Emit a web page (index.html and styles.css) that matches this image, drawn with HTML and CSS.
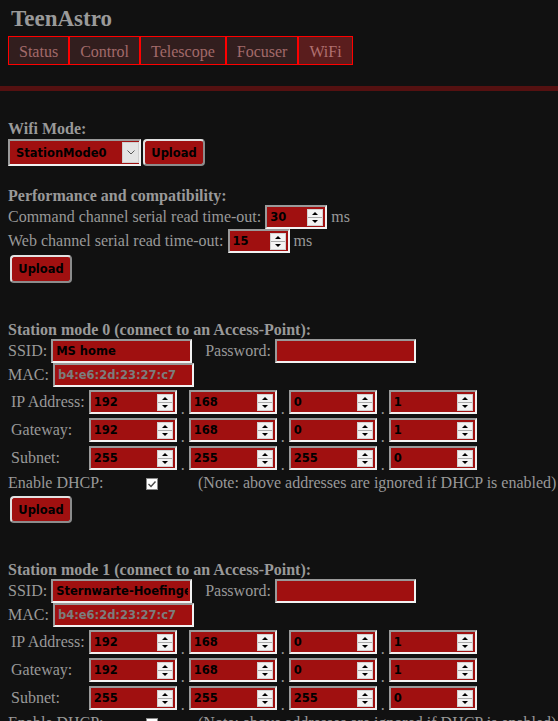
FILE: index.html
```html
<!DOCTYPE html>
<html lang="en">
<head>
<meta charset="utf-8">
<title>TeenAstro</title>
<link rel="stylesheet" href="styles.css">
</head>
<body>
<header class="head">
  <div class="title">TeenAstro</div>
  <nav class="nav">
    <a class="tab">Status</a><a class="tab">Control</a><a class="tab">Telescope</a><a class="tab">Focuser</a><a class="tab active">WiFi</a>
  </nav>
</header>
<div class="rule"></div>
<main class="content">
  <div class="heading first">Wifi Mode:</div>
  <div class="row sel-row">
    <span class="sel">
      <select class="sel-input"><option>StationMode0</option><option>StationMode1</option><option>AccessPoint</option></select>
      <span class="arrow"><svg width="8" height="5" viewBox="0 0 8 5"><path d="M0.5 0.5 L4 4 L7.5 0.5" fill="none" stroke="#5a5a5a" stroke-width="1"/></svg></span>
    </span>
    <button class="btn">Upload</button>
  </div>

  <div class="heading perf">Performance and compatibility:</div>
  <div class="row line">
    <span>Command channel serial read time-out:</span>
    <span class="field w62"><input class="fin" value="30"><span class="spin"><i class="up"></i><i class="dn"></i></span></span>
    <span>ms</span>
  </div>
  <div class="row line">
    <span>Web channel serial read time-out:</span>
    <span class="field w62"><input class="fin" value="15"><span class="spin"><i class="up"></i><i class="dn"></i></span></span>
    <span>ms</span>
  </div>
  <div class="row"><button class="btn b1">Upload</button></div>

  <div class="heading station">Station mode 0 (connect to an Access-Point):</div>
  <div class="row line">
    <span>SSID:</span>
    <span class="field w141"><input class="fin" value="MS home"></span>
    <span class="pw">Password:</span>
    <span class="field w141"><input class="fin" value=""></span>
  </div>
  <div class="row line">
    <span>MAC:</span>
    <span class="field w141"><input class="fin ro" value="b4:e6:2d:23:27:c7" readonly></span>
  </div>
  <table class="ip">
    <tr>
      <td class="lbl">IP Address:</td>
      <td><span class="field w88"><input class="fin" value="192"><span class="spin"><i class="up"></i><i class="dn"></i></span></span></td>
      <td class="dot">.</td>
      <td><span class="field w88"><input class="fin" value="168"><span class="spin"><i class="up"></i><i class="dn"></i></span></span></td>
      <td class="dot">.</td>
      <td><span class="field w88"><input class="fin" value="0"><span class="spin"><i class="up"></i><i class="dn"></i></span></span></td>
      <td class="dot">.</td>
      <td><span class="field w88"><input class="fin" value="1"><span class="spin"><i class="up"></i><i class="dn"></i></span></span></td>
    </tr>
    <tr>
      <td class="lbl">Gateway:</td>
      <td><span class="field w88"><input class="fin" value="192"><span class="spin"><i class="up"></i><i class="dn"></i></span></span></td>
      <td class="dot">.</td>
      <td><span class="field w88"><input class="fin" value="168"><span class="spin"><i class="up"></i><i class="dn"></i></span></span></td>
      <td class="dot">.</td>
      <td><span class="field w88"><input class="fin" value="0"><span class="spin"><i class="up"></i><i class="dn"></i></span></span></td>
      <td class="dot">.</td>
      <td><span class="field w88"><input class="fin" value="1"><span class="spin"><i class="up"></i><i class="dn"></i></span></span></td>
    </tr>
    <tr>
      <td class="lbl">Subnet:</td>
      <td><span class="field w88"><input class="fin" value="255"><span class="spin"><i class="up"></i><i class="dn"></i></span></span></td>
      <td class="dot">.</td>
      <td><span class="field w88"><input class="fin" value="255"><span class="spin"><i class="up"></i><i class="dn"></i></span></span></td>
      <td class="dot">.</td>
      <td><span class="field w88"><input class="fin" value="255"><span class="spin"><i class="up"></i><i class="dn"></i></span></span></td>
      <td class="dot">.</td>
      <td><span class="field w88"><input class="fin" value="0"><span class="spin"><i class="up"></i><i class="dn"></i></span></span></td>
    </tr>
  </table>
  <div class="row dhcp">
    <span class="dlabel">Enable DHCP:</span>
    <span class="check"><svg width="10" height="10" viewBox="0 0 10 10"><path d="M1.5 5 L4 7.5 L8.5 2.5" fill="none" stroke="#4a4a4a" stroke-width="1.4"/></svg></span>
    <span class="note">(Note: above addresses are ignored if DHCP is enabled)</span>
  </div>
  <div class="row"><button class="btn b2">Upload</button></div>

  <div class="heading station">Station mode 1 (connect to an Access-Point):</div>
  <div class="row line">
    <span>SSID:</span>
    <span class="field w141"><input class="fin" value="Sternwarte-Hoefingen"></span>
    <span class="pw">Password:</span>
    <span class="field w141"><input class="fin" value=""></span>
  </div>
  <div class="row line">
    <span>MAC:</span>
    <span class="field w141"><input class="fin ro" value="b4:e6:2d:23:27:c7" readonly></span>
  </div>
  <table class="ip">
    <tr>
      <td class="lbl">IP Address:</td>
      <td><span class="field w88"><input class="fin" value="192"><span class="spin"><i class="up"></i><i class="dn"></i></span></span></td>
      <td class="dot">.</td>
      <td><span class="field w88"><input class="fin" value="168"><span class="spin"><i class="up"></i><i class="dn"></i></span></span></td>
      <td class="dot">.</td>
      <td><span class="field w88"><input class="fin" value="0"><span class="spin"><i class="up"></i><i class="dn"></i></span></span></td>
      <td class="dot">.</td>
      <td><span class="field w88"><input class="fin" value="1"><span class="spin"><i class="up"></i><i class="dn"></i></span></span></td>
    </tr>
    <tr>
      <td class="lbl">Gateway:</td>
      <td><span class="field w88"><input class="fin" value="192"><span class="spin"><i class="up"></i><i class="dn"></i></span></span></td>
      <td class="dot">.</td>
      <td><span class="field w88"><input class="fin" value="168"><span class="spin"><i class="up"></i><i class="dn"></i></span></span></td>
      <td class="dot">.</td>
      <td><span class="field w88"><input class="fin" value="0"><span class="spin"><i class="up"></i><i class="dn"></i></span></span></td>
      <td class="dot">.</td>
      <td><span class="field w88"><input class="fin" value="1"><span class="spin"><i class="up"></i><i class="dn"></i></span></span></td>
    </tr>
    <tr>
      <td class="lbl">Subnet:</td>
      <td><span class="field w88"><input class="fin" value="255"><span class="spin"><i class="up"></i><i class="dn"></i></span></span></td>
      <td class="dot">.</td>
      <td><span class="field w88"><input class="fin" value="255"><span class="spin"><i class="up"></i><i class="dn"></i></span></span></td>
      <td class="dot">.</td>
      <td><span class="field w88"><input class="fin" value="255"><span class="spin"><i class="up"></i><i class="dn"></i></span></span></td>
      <td class="dot">.</td>
      <td><span class="field w88"><input class="fin" value="0"><span class="spin"><i class="up"></i><i class="dn"></i></span></span></td>
    </tr>
  </table>
  <div class="row dhcp">
    <span class="dlabel">Enable DHCP:</span>
    <span class="check"><svg width="10" height="10" viewBox="0 0 10 10"><path d="M1.5 5 L4 7.5 L8.5 2.5" fill="none" stroke="#4a4a4a" stroke-width="1.4"/></svg></span>
    <span class="note">(Note: above addresses are ignored if DHCP is enabled)</span>
  </div>
  <div class="row"><button class="btn b2">Upload</button></div>
</main>
</body>
</html>
```

FILE: styles.css
```css
html, body {
  margin: 0;
  padding: 0;
  background: #111111;
}
body {
  font-family: "Liberation Serif", "Times New Roman", serif;
  font-size: 16px;
  color: #999999;
  overflow: hidden;
}
.head {
  padding: 5px 8px 0 8px;
}
.title {
  font-size: 23px;
  font-weight: bold;
  line-height: 28px;
  margin-left: 3px;
  color: #9a9a9a;
}
.nav {
  display: flex;
  margin-top: 3px;
}
.tab {
  display: block;
  border: 1px solid #ff0000;
  background: #321e1e;
  color: #a26a6a;
  padding: 6px 10px 3px 10px;
  line-height: 18px;
  text-decoration: none;
}
.tab.active {
  background: #5a1d1d;
  color: #b07070;
}
.rule {
  margin-top: 21px;
  height: 5px;
  background: #551111;
}
.content {
  padding: 0 8px;
}
.heading {
  font-weight: bold;
  line-height: 18px;
}
.heading.first { margin-top: 29px; }
.heading.perf { margin-top: 21px; }
.heading.station { margin-top: 38px; }
.row {
  display: flex;
  align-items: center;
  white-space: nowrap;
}
.row.line {
  height: 24px;
  gap: 4px;
}
.sel-row {
  margin-top: 1px;
  height: 27px;
  gap: 2px;
}
.sel {
  box-sizing: border-box;
  display: flex;
  align-items: center;
  width: 133px;
  height: 27px;
  border: 2px solid;
  border-color: #9a9a9a #f0f0f0 #f0f0f0 #9a9a9a;
  background: #a01010;
}
.sel-input {
  appearance: none;
  -webkit-appearance: none;
  flex: 1;
  min-width: 0;
  height: 100%;
  border: 0;
  background: transparent;
  font: bold 11.5px "DejaVu Sans", Verdana, sans-serif;
  color: #000;
  padding: 0 0 0 6px;
  outline: none;
}
.arrow {
  box-sizing: border-box;
  width: 17px;
  height: 21px;
  background: #e4e4e4;
  border: 1px solid #cfcfcf;
  display: flex;
  align-items: center;
  justify-content: center;
}
.btn {
  box-sizing: border-box;
  width: 62px;
  height: 27px;
  border: 2px solid;
  border-color: #e2e2e2 #8c8c8c #8c8c8c #e2e2e2;
  border-radius: 4px;
  background: #a01010;
  color: #000;
  font: bold 11.5px "DejaVu Sans", Verdana, sans-serif;
  padding: 0;
}
.b1 {
  margin: 2px 0 0 2px;
  height: 28px;
}
.b2 {
  margin: 4px 0 0 2px;
  height: 27px;
}
.field {
  box-sizing: border-box;
  display: flex;
  align-items: center;
  height: 24px;
  border: 2px solid;
  border-color: #9a9a9a #f2f2f2 #f2f2f2 #9a9a9a;
  background: #a01010;
  padding: 0 2px 0 3px;
}
.w62 { width: 62px; }
.w88 { width: 88px; }
.w141 { width: 141px; }
.fin {
  flex: 1;
  min-width: 0;
  border: 0;
  padding: 0;
  margin: 0;
  background: transparent;
  font: bold 11.5px "DejaVu Sans", Verdana, sans-serif;
  color: #000;
  outline: none;
}
.fin.ro {
  color: #7c7c7c;
}
.spin {
  box-sizing: border-box;
  width: 16px;
  height: 17px;
  border: 1px solid #d2d2d2;
  background: #f3f3f3;
  display: flex;
  flex-direction: column;
}
.spin i {
  flex: 1;
  display: flex;
  align-items: center;
  justify-content: center;
}
.spin i + i {
  border-top: 1px solid #a8a8a8;
}
.spin i::before {
  content: "";
  width: 0;
  height: 0;
  border-left: 3px solid transparent;
  border-right: 3px solid transparent;
}
.spin .up::before { border-bottom: 3px solid #000; }
.spin .dn::before { border-top: 3px solid #000; }
.pw {
  margin-left: 9px;
}
.ip {
  border-spacing: 2px;
  font-size: 16px;
  color: #999999;
}
.ip td {
  padding: 1px;
}
.ip .lbl {
  white-space: nowrap;
  line-height: 18px;
}
.ip .dot {
  vertical-align: bottom;
  line-height: 10px;
}
.dhcp {
  margin-top: 1px;
  height: 18px;
  line-height: 18px;
}
.dlabel {
  width: 138px;
  flex-shrink: 0;
}
.check {
  box-sizing: border-box;
  width: 12px;
  height: 12px;
  background: #ffffff;
  border: 1px solid #8a8a8a;
  display: flex;
  align-items: center;
  justify-content: center;
  flex-shrink: 0;
  margin-top: 1px;
}
.note {
  margin-left: 40px;
  flex-shrink: 0;
}
```
